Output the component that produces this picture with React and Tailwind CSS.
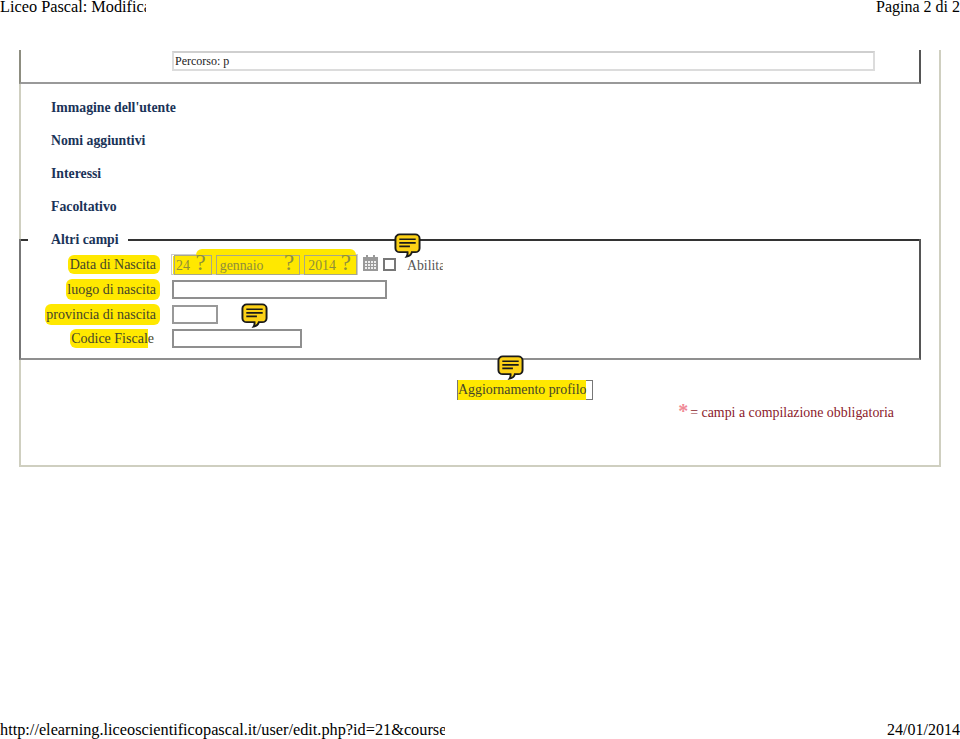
import React from 'react';

const NoteIcon = ({ className }) => (
    <svg className={className} width="27" height="25" viewBox="0 0 28 28" preserveAspectRatio="none" aria-hidden="true">
        <path
            d="M6 1.5h16a4.5 4.5 0 0 1 4.5 4.5v11a4.5 4.5 0 0 1-4.5 4.5h-3.5c-.5 2.5-2.5 4.5-5.5 5 1-1.5 1.2-3 1-5H6A4.5 4.5 0 0 1 1.5 17V6A4.5 4.5 0 0 1 6 1.5z"
            fill="#fcd116"
            stroke="#1a1a1a"
            strokeWidth="2"
        />
        <path d="M5.5 7h17M5.5 11h17M5.5 15h11" stroke="#1a1a1a" strokeWidth="1.8" fill="none" />
    </svg>
);

const CalendarIcon = () => (
    <svg width="15" height="16" viewBox="0 0 15 16" aria-hidden="true">
        <path d="M3 0h2v3H3zM10 0h2v3h-2z" fill="#999" />
        <rect x="0" y="2" width="15" height="14" fill="#999" />
        <path d="M2 6h2v2H2zM5 6h2v2H5zM8 6h2v2H8zM11 6h2v2h-2zM2 9h2v2H2zM5 9h2v2H5zM8 9h2v2H8zM11 9h2v2h-2zM2 12h2v2H2zM5 12h2v2H5zM8 12h2v2H8zM11 12h2v2h-2z" fill="#eee" />
    </svg>
);

const Label = ({ children, className }) => (
    <span className={`rounded-[6px] bg-[#ffe800] pr-[4px] pl-[1.5px] text-[14px] leading-[17px] text-[#45452a] ${className}`}>{children}</span>
);

const HeadingRow = ({ children }) => (
    <div className="pl-[30px] text-[13.75px] leading-[33px] font-bold text-[#1a3358]">{children}</div>
);

const DatePart = ({ value, className }) => (
    <div className={`relative flex h-[20px] items-center border border-[#a8a888] pt-[3px] text-[13.8px] text-[#8f8f3a] ${className}`}>
        {value}
        <span className="absolute right-[5px] top-[-7px] text-[23px] leading-[28px] text-[#8f8f3a]">?</span>
    </div>
);

export default function App() {
    return (
        <div className="relative h-[739px] w-[960px] overflow-hidden bg-white font-['Liberation_Serif',serif] text-black">
            <div className="flex h-[50px] items-start justify-between text-[16px] leading-[13px]">
                <div className="w-[146px] overflow-hidden text-[16.3px] whitespace-nowrap">Liceo Pascal: Modificare</div>
                <div className="whitespace-nowrap">Pagina 2 di 2</div>
            </div>

            <div className="ml-[19px] h-[417px] w-[922px] border-r-2 border-b-2 border-l-2 border-[#cfcfc0]">
                <div className="-ml-[2px] mr-[18px] flex h-[34px] items-start border-r-2 border-b-2 border-l-2 border-[#8d8d80] border-r-[#555] border-b-[#999] pt-[1px] pl-[151px]">
                    <div className="flex h-[20px] w-[703px] items-center border-2 border-[#dcdcdc] border-t-[#cfcfcf] pl-[1px] text-[12px] text-[#222]">
                        Percorso: p
                    </div>
                </div>

                <div className="pt-[7px]">
                    <HeadingRow>Immagine dell'utente</HeadingRow>
                    <HeadingRow>Nomi aggiuntivi</HeadingRow>
                    <HeadingRow>Interessi</HeadingRow>
                    <HeadingRow>Facoltativo</HeadingRow>
                </div>

                {/* fieldset Altri campi */}
                <div className="relative -ml-[2px] mt-[16px] h-[121px] w-[902px] border-r-2 border-b-2 border-l-2 border-[#777] border-r-[#555] border-b-[#8f8f8f]">
                    <div className="absolute left-0 right-0 top-[-8px] flex items-center">
                        <div className="h-[2px] w-[7px] bg-[#333]" />
                        <div className="ml-[23px] w-[77px] text-[13.75px] leading-[17px] font-bold text-[#1a3358]">Altri campi</div>
                        <div className="h-[2px] flex-1 bg-[#333]" />
                    </div>

                    <div className="flex flex-col pt-[13px]">
                        <div className="flex h-[25px] items-center">
                            <div className="flex w-[139px] justify-end">
                                <Label className="py-[1px]">Data di Nascita</Label>
                            </div>
                            <div className="relative ml-[11px] flex h-[21px] w-[187px] items-center gap-[4px] border border-[#ccc] pl-[2px]">
                                <div className="absolute left-[1px] top-[1px] h-[18px] w-[24px] bg-[#ffe800]" />
                                <div className="absolute left-[24px] top-[-6px] h-[25px] w-[160px] rounded-t-[6px] bg-[#ffe800]" />
                                <DatePart value="24" className="w-[38px] pl-[1px]" />
                                <DatePart value="gennaio" className="w-[85px] pl-[3px]" />
                                <DatePart value="2014" className="w-[53px] pl-[3px]" />
                            </div>
                            <div className="ml-[5px] -mt-[3px]"><CalendarIcon /></div>
                            <div className="ml-[5px] h-[13px] w-[13px] border-2 border-[#777] bg-white" />
                            <div className="ml-[11px] mt-[4px] w-[36px] overflow-hidden whitespace-nowrap text-[13.8px] text-[#555]">Abilita</div>
                        </div>
                        <div className="flex h-[25px] items-center">
                            <div className="flex w-[139px] justify-end">
                                <Label className="py-[2px]">luogo di nascita</Label>
                            </div>
                            <div className="ml-[12px] h-[19px] w-[215px] border-2 border-[#8f8f8f]" />
                        </div>
                        <div className="flex h-[24px] items-center">
                            <div className="flex w-[139px] justify-end">
                                <Label className="py-[2px]">provincia di nascita</Label>
                            </div>
                            <div className="ml-[12px] h-[19px] w-[46px] border-2 border-[#999]" />
                        </div>
                        <div className="flex h-[24px] items-center">
                            <div className="flex w-[133px] justify-end">
                                <span className="text-[14px] leading-[17px] text-[#45452a]">
                                    <span className="rounded-l-[6px] bg-[#ffe800] py-[2px] pl-[1px]">Codice Fiscal</span>e
                                </span>
                            </div>
                            <div className="ml-[18px] h-[19px] w-[130px] border-2 border-[#8f8f8f]" />
                        </div>
                    </div>
                </div>

                <div className="ml-[436px] mt-[20px] flex h-[20px] w-[136px] items-center border border-[#777] text-[13.9px] text-[#45452a]">
                    <span className="bg-[#ffe800] whitespace-nowrap">Aggiornamento profilo</span>
                </div>
                <div className="mt-[4px] flex justify-end pr-[45px] text-[13.9px] leading-[18px] text-[#8b1a2b]">
                    <span className="mr-[2px] text-[20px] leading-[14px] font-bold text-[#f08a96]">*</span>= campi a compilazione obbligatoria
                </div>
            </div>

            <NoteIcon className="absolute left-[394px] top-[233px]" />
            <NoteIcon className="absolute left-[241px] top-[303px]" />
            <NoteIcon className="absolute left-[497px] top-[355px]" />

            <div className="absolute bottom-0 left-0 right-0 flex h-[18px] items-center justify-between text-[16px] leading-[18px]">
                <div className="w-[445px] overflow-hidden text-[16.3px] whitespace-nowrap">http://elearning.liceoscientificopascal.it/user/edit.php?id=21&amp;course=1</div>
                <div className="whitespace-nowrap">24/01/2014</div>
            </div>
        </div>
    );
}
